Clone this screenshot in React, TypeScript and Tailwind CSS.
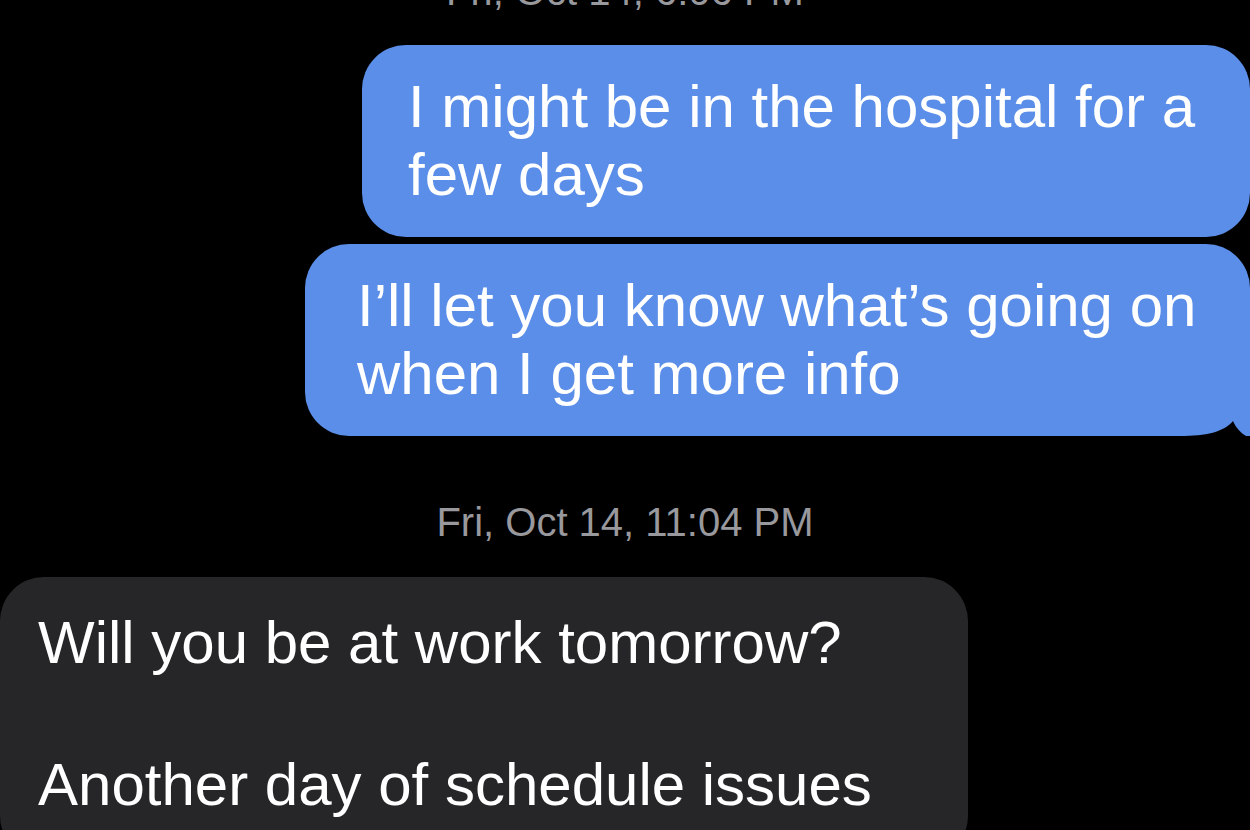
const sent = [
  { id: 1, lines: ['I might be in the hospital for a', 'few days'], width: 'w-[888px]', pad: 'pl-[46px]', tail: false },
  { id: 2, lines: ['I\u2019ll let you know what\u2019s going on', 'when I get more info'], width: 'w-[945px]', pad: 'pl-[52px]', tail: true },
];

function Stamp({ text, className = '' }: { text: string; className?: string }) {
  return (
    <div className={`text-center text-[40px] leading-[40px] text-[#98989d] ${className}`}>{text}</div>
  );
}

// little black notch that shapes the tail on the last outgoing bubble
function Tail() {
  return (
    <svg className="absolute right-0 bottom-0" width="70" height="30" viewBox="0 0 70 30">
      <path d="M0 30 C 26 30 44 26 53 15 C 56 22 61 27 66 30 Z" fill="#000" />
    </svg>
  );
}

export default function App() {
  return (
    <div
      className="w-[1250px] h-[830px] bg-black overflow-hidden flex flex-col"
      style={{ fontFamily: '"Liberation Sans", Arial, sans-serif' }}
    >
      <Stamp text="Fri, Oct 14, 6:06 PM" className="mt-[-29px]" />

      <div className="mt-[34px] flex flex-col items-end gap-[7px]">
        {sent.map((m) => (
          <div
            key={m.id}
            className={`relative ${m.width} ${m.pad} py-[28px] bg-[#5b8ee8] text-white text-[60px] leading-[68px] whitespace-nowrap rounded-[44px] ${m.tail ? 'rounded-br-none' : ''}`}
          >
            {m.lines.map((l) => (
              <div key={l}>{l}</div>
            ))}
            {m.tail && <Tail />}
          </div>
        ))}
      </div>

      <Stamp text="Fri, Oct 14, 11:04 PM" className="mt-[66px]" />

      <div className="mt-[35px] w-[968px] pl-[38px] pt-[30px] pb-[40px] bg-[#262628] text-white text-[60px] leading-[71px] whitespace-nowrap rounded-[44px]">
        <div>Will you be at work tomorrow?</div>
        <div>&nbsp;</div>
        <div>Another day of schedule issues</div>
      </div>
    </div>
  );
}
